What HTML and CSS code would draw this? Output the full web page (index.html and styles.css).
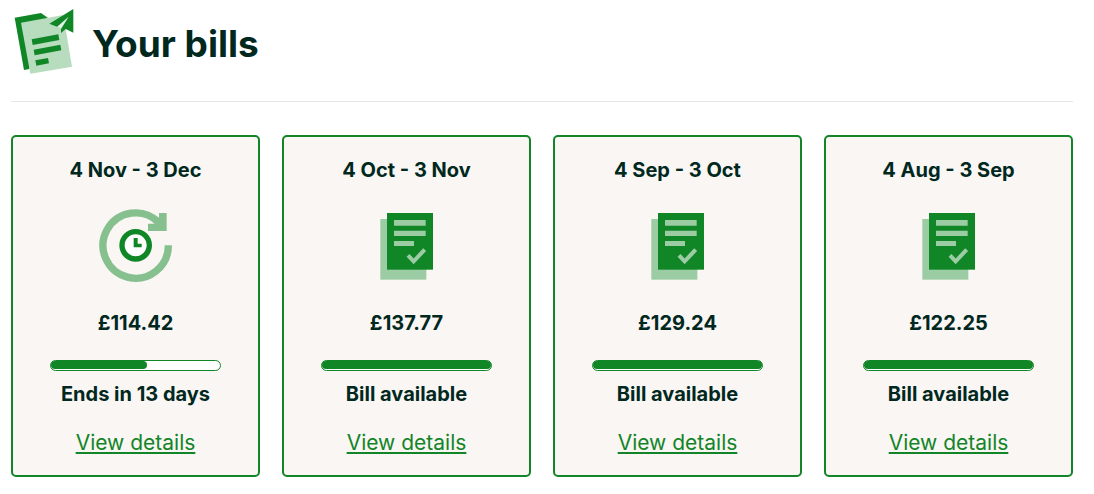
FILE: index.html
```
<!DOCTYPE html>
<html lang="en">
<head>
  <meta charset="UTF-8">
  <meta name="viewport" content="width=device-width, initial-scale=1.0">
  <title>Your bills</title>
  <link rel="stylesheet" href="styles.css">
</head>
<body>

<!-- Shared icons -->
<svg class="sprite" aria-hidden="true">
  <symbol id="icon-bill" viewBox="0 0 228 228">
    <rect x="34" y="36" width="138" height="182" fill="#9ccca3"/>
    <rect x="54" y="18" width="138" height="170" fill="#108626"/>
    <path d="M75 39h95v17H75zM75 71h95v16H75zM75 102h60v15H75z" fill="#9ccca3"/>
    <path d="M117 145l17 18 33-35" fill="none" stroke="#9ccca3" stroke-width="12"/>
  </symbol>
</svg>

<!-- Header -->
<header class="header">
  <svg class="header-icon" viewBox="33 15 192 225" aria-hidden="true">
    <path d="M44 53l79-14 20 14-20 60-35 94-16 3z" fill="#108626"/>
    <path d="M63 68l127-23 26 155-125 21z" fill="#b7dcbe"/>
    <path d="M95 118l80-15 3 17-80 15zM101 149l80-15 3 17-80 15zM106 181l38-7 3 16-38 7z" fill="#108626"/>
    <path d="M208 47l-36 33 11 5 2 10z" fill="#e3f2e6"/>
    <path d="M220 27l-72 44 23 9 35-30-23 37v12l14-12 23 11z" fill="#108626"/>
  </svg>
  <h1>Your bills</h1>
</header>

<!-- Bills -->
<main class="bills">
  <section class="bill">
    <h2>4 Nov - 3 Dec</h2>
    <svg class="bill-icon" viewBox="0 0 228 228" aria-hidden="true">
      <path d="M211 115A98 98 0 1 1 182 46" fill="none" stroke="#87c08f" stroke-width="22"/>
      <path d="M183 18h23v54h-56V50h21l-12-12 17-10 7 6z" fill="#87c08f"/>
      <circle cx="113" cy="115" r="41" fill="#fff" stroke="#108626" stroke-width="16"/>
      <path d="M107 93h12v17h12v11h-24z" fill="#108626"/>
    </svg>
    <p class="amount">£114.42</p>
    <div class="bar"><div class="bar-fill" style="width: 57%"></div></div>
    <p class="status">Ends in 13 days</p>
    <a href="#">View details</a>
  </section>

  <section class="bill">
    <h2>4 Oct - 3 Nov</h2>
    <svg class="bill-icon" aria-hidden="true"><use href="#icon-bill"/></svg>
    <p class="amount">£137.77</p>
    <div class="bar"><div class="bar-fill" style="width: 100%"></div></div>
    <p class="status">Bill available</p>
    <a href="#">View details</a>
  </section>

  <section class="bill">
    <h2>4 Sep - 3 Oct</h2>
    <svg class="bill-icon" aria-hidden="true"><use href="#icon-bill"/></svg>
    <p class="amount">£129.24</p>
    <div class="bar"><div class="bar-fill" style="width: 100%"></div></div>
    <p class="status">Bill available</p>
    <a href="#">View details</a>
  </section>

  <section class="bill">
    <h2>4 Aug - 3 Sep</h2>
    <svg class="bill-icon" aria-hidden="true"><use href="#icon-bill"/></svg>
    <p class="amount">£122.25</p>
    <div class="bar"><div class="bar-fill" style="width: 100%"></div></div>
    <p class="status">Bill available</p>
    <a href="#">View details</a>
  </section>
</main>

</body>
</html>
```
FILE: styles.css
```
* {
  box-sizing: border-box;
}

body {
  margin: 0;
  padding: 5px 21px 16px 11px;
  font-family: Inter, sans-serif;
  color: #00281e;
  background-color: white;
}

h1, h2, p {
  margin: 0;
}

.sprite {
  display: none;
}

/* Header */
.header {
  display: flex;
  align-items: center;
  gap: 17px;
  padding-bottom: 21px;
  border-bottom: 1px solid #e6e6e6;
}

.header-icon {
  width: 64px;
  height: 75px;
}

.header h1 {
  padding-top: 3px;
  font-size: 37px;
  font-weight: 700;
  line-height: 48px;
}

/* Bill cards */
.bills {
  display: grid;
  grid-template-columns: repeat(4, 1fr);
  gap: 22px;
  margin-top: 33px;
}

.bill {
  display: flex;
  flex-direction: column;
  align-items: center;
  padding: 19px 37px 18px;
  background-color: #faf6f3;
  border: 2px solid #128529;
  border-radius: 5px;
  font-size: 21px;
  line-height: 28px;
  white-space: nowrap;
}

.bill h2, .amount, .status {
  font-size: 20px;
  font-weight: 700;
}

.bill-icon {
  width: 76px;
  height: 76px;
  margin: 23px 0 26px;
}

.bar {
  width: 100%;
  height: 11px;
  margin: 23px 0 9px;
  background-color: white;
  border: 1px solid #108626;
  border-radius: 6px;
}

.bar-fill {
  height: 8px;
  background-color: #108626;
  border-radius: 4px;
}

.bill a {
  margin-top: 21px;
  color: #128529;
  text-decoration-thickness: 2px;
  text-underline-offset: 2px;
}
```
